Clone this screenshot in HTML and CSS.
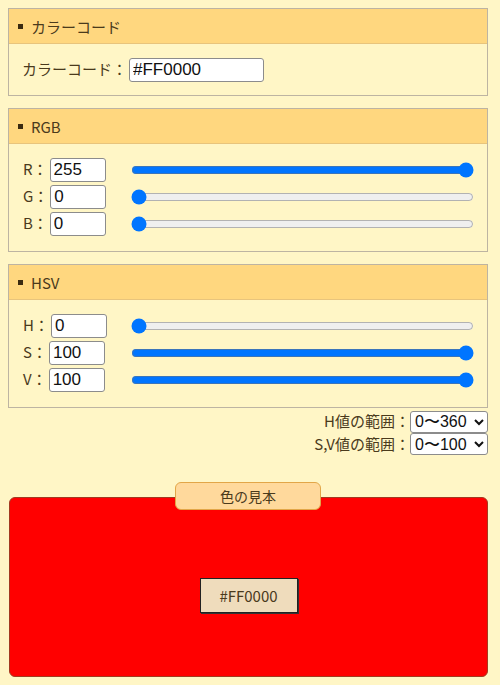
FILE: index.html
```html
<!DOCTYPE html>
<html lang="ja">
  <head>
    <meta charset="UTF-8" />
    <title>カラーコード変換</title>
    <link rel="stylesheet" href="styles.css">
  </head>
  <body>
    <div class="panel">
      <h2 class="panel-head">カラーコード</h2>
      <div class="panel-body">
        <label class="code-row">カラーコード：<input class="num code" type="text" value="#FF0000"></label>
      </div>
    </div>

    <div class="panel">
      <h2 class="panel-head">RGB</h2>
      <div class="panel-body rows">
        <label class="field">R：<input class="num" type="text" value="255"></label>
        <input class="slider" type="range" min="0" max="255" value="255">
        <label class="field">G：<input class="num" type="text" value="0"></label>
        <input class="slider" type="range" min="0" max="255" value="0">
        <label class="field">B：<input class="num" type="text" value="0"></label>
        <input class="slider" type="range" min="0" max="255" value="0">
      </div>
    </div>

    <div class="panel">
      <h2 class="panel-head">HSV</h2>
      <div class="panel-body rows">
        <label class="field">H：<input class="num" type="text" value="0"></label>
        <input class="slider" type="range" min="0" max="360" value="0">
        <label class="field">S：<input class="num" type="text" value="100"></label>
        <input class="slider" type="range" min="0" max="100" value="100">
        <label class="field">V：<input class="num" type="text" value="100"></label>
        <input class="slider" type="range" min="0" max="100" value="100">
      </div>
    </div>

    <div class="ranges">
      <label>H値の範囲：<select class="pick"><option>0〜360</option><option>0〜1</option></select></label>
      <label>S,V値の範囲：<select class="pick"><option>0〜100</option><option>0〜1</option></select></label>
    </div>

    <div class="sample">
      <div class="sample-title">色の見本</div>
      <div class="sample-box">
        <span class="sample-code">#FF0000</span>
      </div>
    </div>
  </body>
</html>
```

FILE: styles.css
```css
body {
  margin: 8px;
  background: #fff6c6;
  color: #4a3a1c;
  font-family: "Noto Sans CJK JP", "Noto Sans", sans-serif;
  font-size: 15px;
}

/* 各セクション */
.panel {
  width: 478px;
  border: 1px solid #bdb4a2;
  margin-bottom: 12px;
}
.panel-head {
  margin: 0;
  height: 34px;
  padding-left: 9px;
  display: flex;
  align-items: center;
  gap: 8px;
  background: #ffd77f;
  border-bottom: 1px solid #e8c47c;
  font-size: 15px;
  font-weight: normal;
}
.panel-head::before {
  content: "";
  width: 5px;
  height: 5px;
  background: #3a2a10;
}
.panel-body {
  padding: 14px 13px 13px;
}

input.num {
  width: 48px;
  height: 18px;
  margin: 0 0 0 2px;
  padding: 2px 3px;
  border: 1px solid #8c8c8c;
  border-radius: 3px;
  background: #fff;
  color: #111;
  font-family: "Liberation Sans", sans-serif;
  font-size: 17px;
}
input.code {
  width: 127px;
}

/* RGB / HSV の行 */
.rows {
  display: grid;
  grid-template-columns: 100px 1fr;
  column-gap: 9px;
  row-gap: 3px;
  align-items: center;
  padding-top: 14px;
  padding-bottom: 15px;
}
.field {
  padding-left: 1px;
}
.slider {
  margin: 0;
  width: 100%;
}

/* 範囲の選択 */
.ranges {
  width: 480px;
  display: flex;
  flex-direction: column;
  align-items: flex-end;
  gap: 0;
  margin-top: -10px;
}
.pick {
  width: 78px;
  height: 22px;
  margin: 0;
  border: 1px solid #8c8c8c;
  border-radius: 3px;
  background: #fff;
  color: #111;
  font-family: "Liberation Sans", sans-serif;
  font-size: 16px;
}

/* 色の見本 */
.sample {
  width: 480px;
  margin-top: 27px;
  display: flex;
  flex-direction: column;
  align-items: center;
}
.sample-title {
  position: relative;
  z-index: 1;
  width: 144px;
  height: 26px;
  margin-bottom: -13px;
  line-height: 26px;
  text-align: center;
  font-size: 14px;
  background: #ffd99c;
  border: 1px solid #e2a648;
  border-radius: 6px;
}
.sample-box {
  align-self: stretch;
  margin-left: 1px;
  height: 162px;
  padding-top: 16px;
  display: flex;
  align-items: center;
  justify-content: center;
  background: #ff0000;
  border: 1px solid #a23a20;
  border-radius: 6px;
}
.sample-code {
  width: 96px;
  height: 33px;
  line-height: 33px;
  text-align: center;
  font-size: 15px;
  background: #efdcbc;
  border: 1px solid #222;
  box-shadow: 1px 1px 0 #333;
}
```
